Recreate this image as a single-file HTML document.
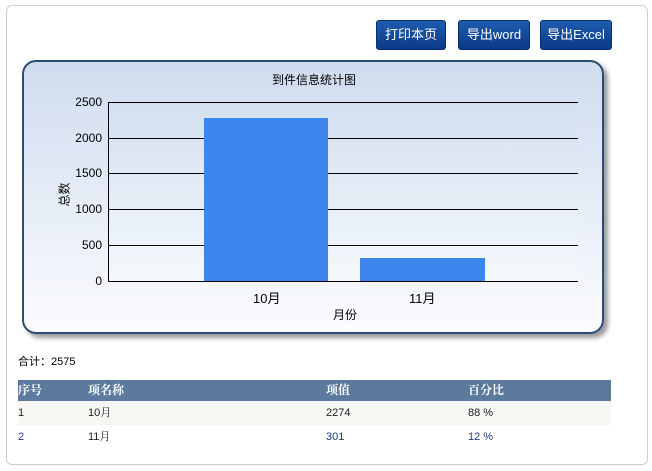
<!DOCTYPE html>
<html><head><meta charset="utf-8"><style>
body{margin:0;width:652px;height:471px;background:#fff;font-family:"Liberation Sans","Noto Sans CJK SC",sans-serif;position:relative;overflow:hidden}
.box{position:absolute;left:6px;top:5px;width:640px;height:458px;border:1px solid #c8cfdc;border-radius:6px}
.btn{position:absolute;top:20px;height:28px;line-height:28px;color:#fff;font-size:13px;text-align:center;border-radius:3px;background:linear-gradient(#1e5cb0,#0a3a86);border:1px solid #08306e}
.panel{position:absolute;left:22px;top:60px;width:578px;height:270px;border:2px solid #2c4b72;border-radius:14px;background:linear-gradient(#cfdcef,#fbfcfe);box-shadow:4px 4px 5px #9a9a9a}
.t{position:absolute;font-size:12px;color:#000}
.gl{position:absolute;left:108px;width:470px;height:1px;background:#000}
.yl{position:absolute;width:40px;left:62px;text-align:right;font-size:12px}
.tbl{position:absolute;left:18px;top:380px;width:593px;font-size:11px;font-family:"Liberation Sans","Noto Serif CJK SC",sans-serif}
.r{position:relative;height:23px;line-height:23px}
.r span{position:absolute}
</style></head><body>
<div class="box"></div>
<div class="btn" style="left:376px;width:68px">打印本页</div>
<div class="btn" style="left:458px;width:70px">导出word</div>
<div class="btn" style="left:540px;width:70px">导出Excel</div>
<div class="panel"></div>
<div style="position:absolute;left:110px;top:102px;width:468px;height:179px;background:linear-gradient(#d3dff0,#f5f8fc)"></div>
<div class="t" style="left:272px;top:71px">到件信息统计图</div>
<div class="gl" style="top:102px"></div><div class="gl" style="top:138px"></div><div class="gl" style="top:173px"></div><div class="gl" style="top:209px"></div><div class="gl" style="top:245px"></div><div class="gl" style="top:281px;height:1px"></div>
<div style="position:absolute;left:108px;top:102px;width:1px;height:180px;background:#000"></div>
<div class="yl" style="top:95px">2500</div><div class="yl" style="top:131px">2000</div><div class="yl" style="top:166px">1500</div><div class="yl" style="top:202px">1000</div><div class="yl" style="top:238px">500</div><div class="yl" style="top:274px">0</div>
<div style="position:absolute;left:204px;top:118px;width:124px;height:163px;background:#3e86ee"></div>
<div style="position:absolute;left:360px;top:258px;width:125px;height:23px;background:#3e86ee"></div>
<div class="t" style="left:253px;top:288px;font-size:13px">10月</div>
<div class="t" style="left:409px;top:288px;font-size:13px">11月</div>
<div class="t" style="left:333px;top:306px">月份</div>
<div class="t" style="left:52px;top:186px;transform:rotate(-90deg)">总数</div>
<div class="t" style="left:18px;top:353px;font-size:11px">合计：2575</div>
<div class="tbl">
<div class="r" style="background:#5b7a9e;color:#fff;font-weight:bold;height:21px;line-height:21px;font-size:12px"><span style="left:0">序号</span><span style="left:70px">项名称</span><span style="left:308px">项值</span><span style="left:450px">百分比</span></div>
<div class="r" style="background:#f7f6f3;color:#222;height:24px;line-height:24px"><span style="left:0">1</span><span style="left:70px">10月</span><span style="left:308px">2274</span><span style="left:450px">88 %</span></div>
<div class="r" style="color:#1c3d7a;height:24px;line-height:24px"><span style="left:0">2</span><span style="left:70px;color:#222">11月</span><span style="left:308px">301</span><span style="left:450px">12 %</span></div>
</div>
</body></html>
